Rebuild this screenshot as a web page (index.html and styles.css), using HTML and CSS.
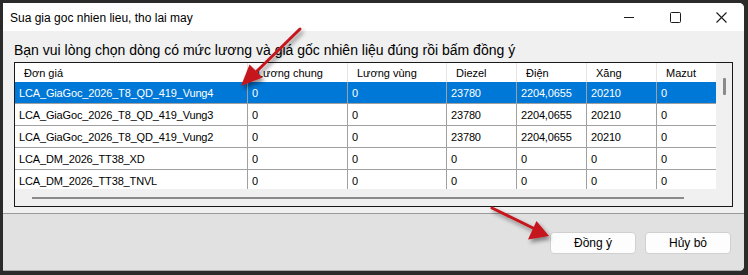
FILE: index.html
```html
<!DOCTYPE html>
<html lang="vi">
<head>
<meta charset="utf-8">
<title>Sua gia goc nhien lieu, tho lai may</title>
<link rel="stylesheet" href="styles.css">
</head>
<body>
<div class="window">
  <div class="titlebar">
    <span class="title">Sua gia goc nhien lieu, tho lai may</span>
    <div class="controls">
      <span class="ctl"><svg width="10" height="10" viewBox="0 0 10 10"><path d="M0 5.5H10" stroke="#1a1a1a" stroke-width="1"/></svg></span>
      <span class="ctl"><svg width="11" height="11" viewBox="0 0 11 11"><rect x="0.5" y="0.5" width="10" height="10" rx="1" fill="none" stroke="#1a1a1a" stroke-width="1"/></svg></span>
      <span class="ctl"><svg width="11" height="11" viewBox="0 0 11 11"><path d="M0.5 0.5L10.5 10.5M10.5 0.5L0.5 10.5" stroke="#1a1a1a" stroke-width="1.1"/></svg></span>
    </div>
  </div>
  <div class="content">
    <div class="prompt">Bạn vui lòng chọn dòng có mức lương và giá gốc nhiên liệu đúng rồi bấm đồng ý</div>
    <div class="grid">
      <div class="grid-main">
        <div class="grid-view">
          <div class="row head">
            <div class="cell">Đơn giá</div><div class="cell">Lương chung</div><div class="cell">Lương vùng</div><div class="cell">Diezel</div><div class="cell">Điện</div><div class="cell">Xăng</div><div class="cell">Mazut</div>
          </div>
          <div class="row sel">
            <div class="cell">LCA_GiaGoc_2026_T8_QD_419_Vung4</div><div class="cell">0</div><div class="cell">0</div><div class="cell">23780</div><div class="cell">2204,0655</div><div class="cell">20210</div><div class="cell">0</div>
          </div>
          <div class="row">
            <div class="cell">LCA_GiaGoc_2026_T8_QD_419_Vung3</div><div class="cell">0</div><div class="cell">0</div><div class="cell">23780</div><div class="cell">2204,0655</div><div class="cell">20210</div><div class="cell">0</div>
          </div>
          <div class="row">
            <div class="cell">LCA_GiaGoc_2026_T8_QD_419_Vung2</div><div class="cell">0</div><div class="cell">0</div><div class="cell">23780</div><div class="cell">2204,0655</div><div class="cell">20210</div><div class="cell">0</div>
          </div>
          <div class="row">
            <div class="cell">LCA_DM_2026_TT38_XD</div><div class="cell">0</div><div class="cell">0</div><div class="cell">0</div><div class="cell">0</div><div class="cell">0</div><div class="cell">0</div>
          </div>
          <div class="row">
            <div class="cell">LCA_DM_2026_TT38_TNVL</div><div class="cell">0</div><div class="cell">0</div><div class="cell">0</div><div class="cell">0</div><div class="cell">0</div><div class="cell">0</div>
          </div>
        </div>
        <div class="vscroll"><div class="vthumb"></div></div>
      </div>
      <div class="hscroll"><div class="hthumb"></div></div>
    </div>
  </div>
  <div class="footer">
    <button class="btn">Đồng ý</button>
    <button class="btn">Hủy bỏ</button>
  </div>
</div>
<svg class="arrows" width="748" height="275" viewBox="0 0 748 275">
  <defs>
    <filter id="sh" x="-30%" y="-30%" width="160%" height="160%">
      <feDropShadow dx="2" dy="3" stdDeviation="2" flood-color="#000" flood-opacity="0.45"/>
    </filter>
  </defs>
  <g filter="url(#sh)" fill="#c4161c" stroke="#c4161c">
    <path d="M300 29L256 72" stroke-width="3" fill="none" stroke-linecap="round"/>
    <path d="M241 86L249.5 64.5L262.5 77.5Z" stroke="none"/>
    <path d="M492 208L534 228.5" stroke-width="3" fill="none" stroke-linecap="round"/>
    <path d="M549 236L528 239.5L536.5 221Z" stroke="none"/>
  </g>
</svg>
</body>
</html>
```

FILE: styles.css
```css
* { box-sizing: border-box; }
html, body { margin: 0; padding: 0; }
body {
  background: #2b2b2b;
  width: 748px;
  height: 275px;
  overflow: hidden;
  position: relative;
  font-family: "Liberation Sans", Arial, sans-serif;
}
.window {
  margin: 3px 0 0 3px;
  width: 741px;
  height: 268px;
  background: #f0f0f0;
  border-radius: 0 5px 5px 0;
  overflow: hidden;
  display: flex;
  flex-direction: column;
}
.titlebar {
  height: 28px;
  background: #ffffff;
  display: flex;
  align-items: center;
  justify-content: space-between;
  flex: none;
}
.title {
  font-size: 12px;
  color: #000;
  padding-left: 7px;
  padding-top: 1px;
}
.controls { display: flex; height: 100%; }
.ctl {
  width: 46px;
  height: 100%;
  display: flex;
  align-items: center;
  justify-content: center;
}
.content {
  height: 182px;
  flex: none;
  padding: 11px 0 0 11px;
}
.prompt {
  font-size: 14px;
  line-height: 16px;
  height: 16px;
  color: #000;
  white-space: nowrap;
}
.grid {
  margin-top: 4px;
  width: 719px;
  height: 145px;
  border: 1px solid #1a1a1a;
  background: #f0f0f0;
  display: flex;
  flex-direction: column;
}
.grid-main { display: flex; height: 126px; }
.grid-view {
  width: 701px;
  height: 126px;
  overflow: hidden;
  background: #f0f0f0;
}
.row {
  display: grid;
  grid-template-columns: 233px 100px 99px 70px 70px 70px 70px;
  height: 22px;
  border-bottom: 1px solid #a0a0a0;
  background: #fff;
  font-size: 11px;
  color: #000;
  width: 712px;
}
.row .cell {
  border-right: 1px solid #a0a0a0;
  padding-left: 4px;
  display: flex;
  align-items: center;
  white-space: nowrap;
  overflow: hidden;
  letter-spacing: -0.15px;
}
.row.head {
  height: 19px;
  border-bottom: none;
}
.row.head .cell {
  border-right: 1px solid #e5e5e5;
  padding-left: 9px;
  letter-spacing: 0;
}
.row.sel { background: #0078d7; color: #fff; }
.row.sel .cell { border-right-color: #a0a0a0; }
.vscroll {
  width: 16px;
  height: 126px;
  position: relative;
  background: #f0f0f0;
}
.vthumb {
  margin: 15px 0 0 7px;
  width: 3px;
  height: 17px;
  background: #8a8a8a;
  border-radius: 1px;
}
.hscroll {
  height: 17px;
  background: #f0f0f0;
  padding: 8px 0 0 17px;
}
.hthumb {
  width: 652px;
  height: 2px;
  background: #8a8a8a;
}
.footer {
  flex: 1;
  border-top: 1px solid #9a9a9a;
  border-bottom: 1px solid #a8a8a8;
  background: #e1e1e1;
  display: flex;
  justify-content: flex-end;
  align-items: flex-start;
  gap: 9px;
  padding: 18px 13px 0 0;
}
.btn {
  width: 86px;
  height: 22px;
  border: 1px solid #d0d0d0;
  border-radius: 4px;
  background: #fdfdfd;
  font-family: "Liberation Sans", Arial, sans-serif;
  font-size: 12px;
  color: #000;
  padding: 0;
}
.arrows {
  position: absolute;
  left: 0;
  top: 0;
  pointer-events: none;
}
```
